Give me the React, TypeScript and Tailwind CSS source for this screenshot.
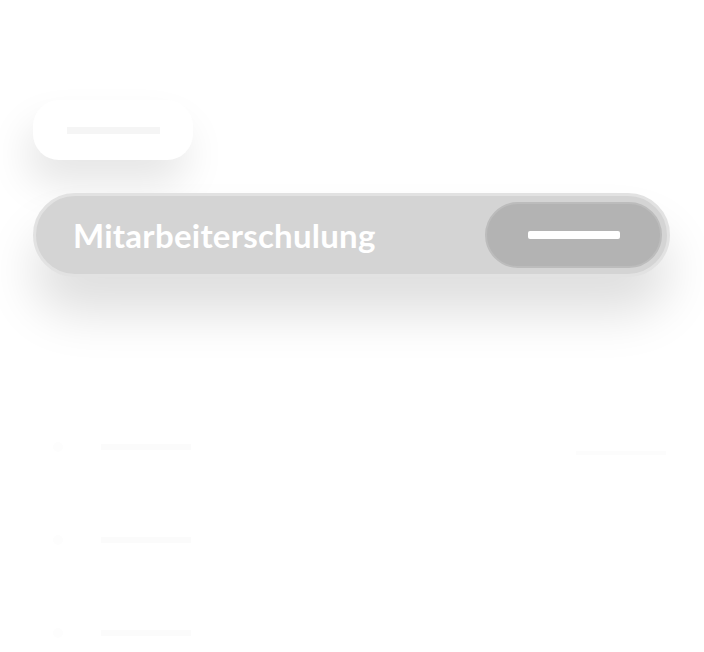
export default function App() {
  const rows = [0, 1, 2];
  return (
    <div className="min-h-[652px] w-full bg-white overflow-hidden" style={{ fontFamily: 'Lato, "Noto Sans", sans-serif' }}>
      <div className="pt-[100px] pl-[33px] pr-[34px]">
        {/* small faded tab */}
        <div className="w-[160px] h-[60px] rounded-[26px] bg-white shadow-[-6px_24px_40px_rgba(0,0,0,0.10)] flex items-center pl-[34px]">
          <div className="w-[93px] h-[7px] bg-[#f5f5f5]" />
        </div>

        {/* main pill */}
        <div className="mt-[33px] h-[84px] rounded-full bg-[#d4d4d4] border-[3px] border-[#e2e2e2] shadow-[0_36px_50px_rgba(0,0,0,0.13)] flex items-center justify-between pl-[37px] pr-[5px]">
          <span className="text-[33px] font-bold text-white leading-none tracking-[0.25px]">Mitarbeiterschulung</span>
          <div className="w-[177px] h-[66px] rounded-full bg-[#b3b3b3] border-[2px] border-[#bcbcbc] flex items-center justify-center">
            <div className="w-[92px] h-[8px] rounded-[2px] bg-white" />
          </div>
        </div>

        {/* very faint list below */}
        <div className="mt-[166px] flex flex-col gap-[85px]">
          {rows.map((r) => (
            <div key={r} className="flex items-center h-[8px]">
              <div className="w-[10px] h-[10px] rounded-full bg-[#fdfdfd] ml-[20px]" />
              <div className="w-[90px] h-[6px] bg-[#fbfbfb] ml-[38px]" />
              {r === 0 && <div className="w-[90px] h-[4px] bg-[#fcfcfc] ml-auto mr-[4px] mt-[12px]" />}
            </div>
          ))}
        </div>
      </div>
    </div>
  );
}
